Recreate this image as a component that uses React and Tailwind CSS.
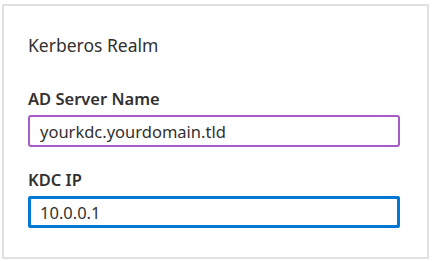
import React from "react";

export default function App() {
  return (
    <div className="w-[432px] h-[261px] bg-white pt-1 pl-[2px]" style={{ fontFamily: '"Noto Sans", "Open Sans", sans-serif' }}>
      <div className="w-[427px] h-[255px] border-2 border-[#e1e1e1] px-6 pt-[28px] text-[#323130]">
        <div className="text-[17.5px] leading-[22px]">Kerberos Realm</div>

        <label className="block mt-[32px] text-[16.5px] leading-[22px] font-semibold">AD Server Name</label>
        <input
          type="text"
          defaultValue="yourkdc.yourdomain.tld"
          className="mt-[5px] w-[372px] h-[32px] border-2 border-[#a55cc4] rounded-[3px] px-[10px] text-[16.5px] text-[#323130] outline-none"
        />

        <label className="block mt-[22px] text-[16.5px] leading-[22px] font-semibold">KDC IP</label>
        <input
          type="text"
          defaultValue="10.0.0.1"
          className="mt-[5px] w-[372px] h-[32px] border-[3px] border-[#0078d4] rounded-[2px] px-[9px] text-[16.5px] text-[#323130] outline-none"
        />
      </div>
    </div>
  );
}
